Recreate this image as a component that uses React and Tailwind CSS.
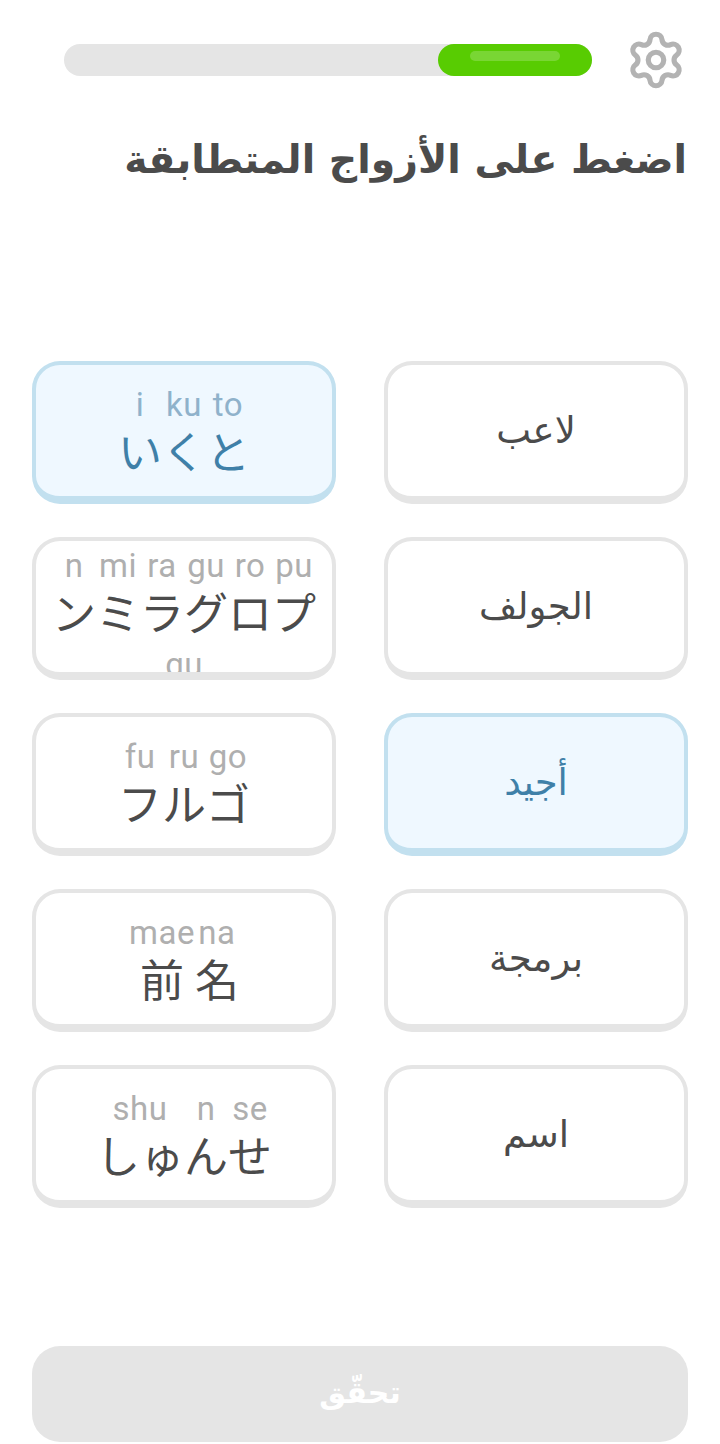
import { Settings } from "lucide-react";

const arabicFont = "font-['DejaVu_Sans',sans-serif]";

const rows = [
  { word: "لاعب", selectedWord: false, selected: true, parts: [["i", "い"], ["ku", "く"], ["to", "と"]] },
  { word: "الجولف", selectedWord: false, selected: false, wrapped: true, parts: [["n", "ン"], ["mi", "ミ"], ["ra", "ラ"], ["gu", "グ"], ["ro", "ロ"], ["pu", "プ"], ["gu", "グ"]] },
  { word: "أجيد", selectedWord: true, selected: false, parts: [["fu", "フ"], ["ru", "ル"], ["go", "ゴ"]] },
  { word: "برمجة", selectedWord: false, selected: false, parts: [["mae", "前"], ["na", "名"]] },
  { word: "اسم", selectedWord: false, selected: false, parts: [["shu", "しゅ"], ["n", "ん"], ["se", "せ"]] },
];

const Card = ({ selected, children }) => (
  <div
    className={`h-[143px] rounded-[28px] border-4 border-b-8 overflow-hidden flex items-center justify-center ${
      selected ? "bg-[#eff8ff] border-[#c2e0ef] text-[#3f80a8]" : "bg-white border-[#e5e5e5] text-[#4b4b4b]"
    }`}
  >
    {children}
  </div>
);

const Kana = ({ parts, selected, wrapped }) => (
  <div dir="ltr" className={`flex flex-wrap justify-center gap-y-[9px] ${wrapped ? "self-start pt-1.5" : ""}`}>
    {parts.map((part, index) => (
      <div key={index} className="flex flex-col items-center">
        <span className={`font-['Roboto',sans-serif] text-[33px] leading-[38px] tracking-[0.5px] ${selected ? "text-[#8fb2cb]" : "text-[#afafaf]"}`}>
          {part[0]}
        </span>
        <span className="font-['Noto_Sans_CJK_JP',sans-serif] text-[44px] leading-[52px]">{part[1]}</span>
      </div>
    ))}
  </div>
);

const App = () => {
  return (
    <div dir="rtl" className={`h-[1444px] bg-white flex flex-col ${arabicFont}`}>
      <div className="flex items-center gap-[33px] pt-[29px] pr-[33px] pl-16">
        <Settings size={62} strokeWidth={2} className="text-[#b3b3b3] shrink-0" />
        <div className="h-8 flex-1 rounded-full bg-[#e5e5e5]">
          <div className="h-8 w-[154px] rounded-full bg-[#58cc02] pt-[7px] px-8">
            <div className="h-2.5 rounded-full bg-[#79d634]"></div>
          </div>
        </div>
      </div>

      <h1 className="mt-9 pr-[33px] text-[39.4px] leading-[64px] font-bold text-[#4b4b4b]">
        اضغط على الأزواج المتطابقة
      </h1>

      <div className="mt-[170px] px-8 grid grid-cols-2 gap-x-12 gap-y-[33px]">
        {rows.map((row, index) => [
          <Card key={`word-${index}`} selected={row.selectedWord}>
            <span className="text-[37px] leading-[48px]">{row.word}</span>
          </Card>,
          <Card key={`kana-${index}`} selected={row.selected}>
            <Kana parts={row.parts} selected={row.selected} wrapped={row.wrapped} />
          </Card>,
        ])}
      </div>

      <div className="mt-auto mx-8 mb-0.5 h-24 rounded-[28px] bg-[#e5e5e5] flex items-center justify-center pb-1">
        <span className="text-[30px] font-bold text-white">تحقّق</span>
      </div>
    </div>
  );
};

export default App;
